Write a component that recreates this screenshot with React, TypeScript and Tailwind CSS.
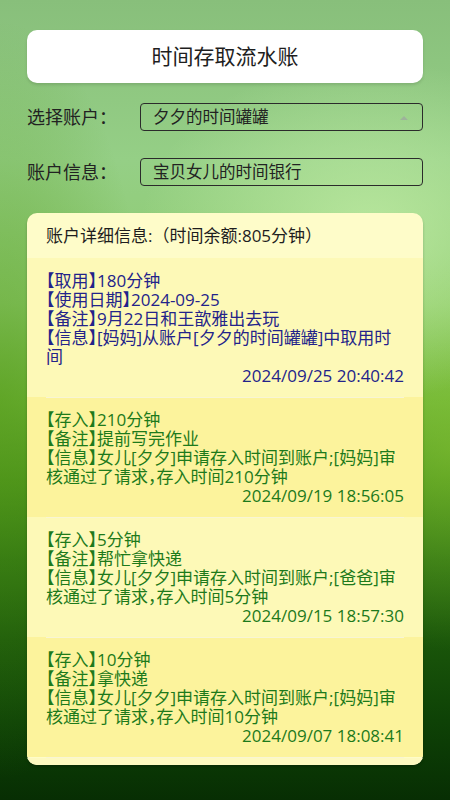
import React from "react";

type Item = {
  color: "blue" | "green";
  tint: "light" | "dark";
  lines: string[];
  date: string;
};

const items: Item[] = [
  {
    color: "blue",
    tint: "light",
    lines: [
      "【取用】180分钟",
      "【使用日期】2024-09-25",
      "【备注】9月22日和王歆雅出去玩",
      "【信息】[妈妈]从账户[夕夕的时间罐罐]中取用时间",
    ],
    date: "2024/09/25 20:40:42",
  },
  {
    color: "green",
    tint: "dark",
    lines: [
      "【存入】210分钟",
      "【备注】提前写完作业",
      "【信息】女儿[夕夕]申请存入时间到账户;[妈妈]审核通过了请求，存入时间210分钟",
    ],
    date: "2024/09/19 18:56:05",
  },
  {
    color: "green",
    tint: "light",
    lines: [
      "【存入】5分钟",
      "【备注】帮忙拿快递",
      "【信息】女儿[夕夕]申请存入时间到账户;[爸爸]审核通过了请求，存入时间5分钟",
    ],
    date: "2024/09/15 18:57:30",
  },
  {
    color: "green",
    tint: "dark",
    lines: [
      "【存入】10分钟",
      "【备注】拿快递",
      "【信息】女儿[夕夕]申请存入时间到账户;[妈妈]审核通过了请求，存入时间10分钟",
    ],
    date: "2024/09/07 18:08:41",
  },
];

function Record({ item, first }: { item: Item; first: boolean }) {
  const textColor = item.color === "blue" ? "text-[#23238a]" : "text-[#1d7a1b]";
  const bg = item.tint === "light" ? "bg-[#fdf9b7]" : "bg-[#fcf39c]";
  return (
    <div className={bg}>
      {!first && <div className="mx-[19px] h-px bg-[#f8f5d4]" />}
      <div
        className={`${textColor} px-[19px] ${first ? "pt-[13px]" : "pt-[12px]"} pb-[12px] text-[17px] leading-[19px] [font-feature-settings:'halt']`}
      >
        {item.lines.map((l, i) => (
          <div key={i}>{l}</div>
        ))}
        <div className="text-right">{item.date}</div>
      </div>
    </div>
  );
}

export default function App() {
  return (
    <div
      className="min-h-[800px] w-full bg-[radial-gradient(ellipse_230px_170px_at_370px_230px,rgba(196,238,168,0.75),rgba(196,238,168,0)),radial-gradient(ellipse_150px_380px_at_0px_400px,rgba(80,150,20,0.5),rgba(80,150,20,0)),radial-gradient(ellipse_150px_200px_at_450px_450px,rgba(140,200,50,0.45),rgba(140,200,50,0)),linear-gradient(180deg,#88bf7b_0%,#95cf86_20%,#8dcb6c_38%,#70b53a_50%,#4f961e_60%,#2f7312_70%,#1a560a_80%,#0e4206_90%,#072e03_100%)]"
      style={{ fontFamily: '"Open Sans", "Noto Sans CJK SC", sans-serif' }}
    >
      <div className="px-[27px] pt-[30px] pb-[35px]">
        <div className="flex h-[53px] items-center justify-center rounded-[10px] bg-white text-[21px] text-[#1e1e1e] shadow-[0_2px_3px_rgba(0,0,0,0.12)]">
          时间存取流水账
        </div>

        <div className="mt-[20px] flex h-[28px] items-center">
          <div className="w-[113px] text-[18px] text-[#222]">选择账户：</div>
          <div className="relative flex h-full flex-1 items-center rounded-[4px] border border-[#2b2b2b] px-[12px] text-[16.5px] text-[#222]">
            夕夕的时间罐罐
            <div className="absolute right-[14px] top-[12px] h-0 w-0 border-x-[4px] border-b-[4px] border-x-transparent border-b-[#9db39a]" />
          </div>
        </div>

        <div className="mt-[27px] flex h-[28px] items-center">
          <div className="w-[113px] text-[18px] text-[#222]">账户信息：</div>
          <div className="flex h-full flex-1 items-center rounded-[4px] border border-[#2b2b2b] px-[12px] text-[16.5px] text-[#222]">
            宝贝女儿的时间银行
          </div>
        </div>

        <div className="mt-[27px] overflow-hidden rounded-[10px] bg-[#fefcc9] shadow-[0_2px_3px_rgba(0,0,0,0.2)]">
          <div className="flex h-[45px] items-center px-[19px] text-[17px] text-[#1e1e1e]">
            账户详细信息:（时间余额:805分钟）
          </div>
          {items.map((it, i) => (
            <Record key={i} item={it} first={i === 0} />
          ))}
          <div className="mx-[19px] h-px bg-[#f8f5d4]" />
          <div className="h-[7px] bg-[#fdf9c0]" />
        </div>
      </div>
    </div>
  );
}
